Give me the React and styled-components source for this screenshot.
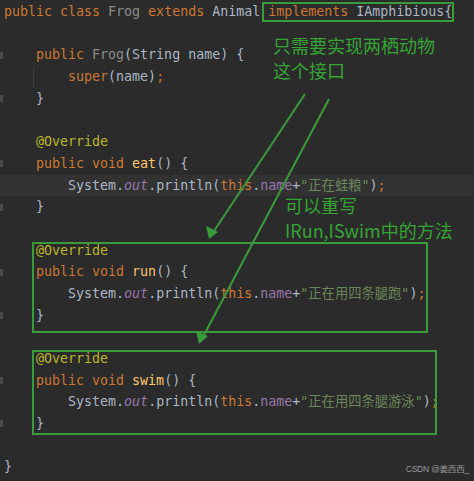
import React from "react";
import styled, { createGlobalStyle } from "styled-components";

const GlobalStyle = createGlobalStyle`
  html, body {
    margin: 0;
    padding: 0;
    background: #2b2b2b;
  }
`;

const colors = {
  kw: "#cc7832",
  plain: "#a9b7c6",
  dim: "#8c8c8c",
  ann: "#bbb529",
  fn: "#ffc66d",
  field: "#9876aa",
  str: "#6a8759",
};

const GREEN = "#3a9b3a";

export default function App() {
  return (
    <>
      <GlobalStyle />
      <Editor>
        {codeLines.map((line, index) => (
          <Line key={index} $current={line.current}>
            <Gutter>{line.fold && <FoldMark />}</Gutter>
            <Code $guide={line.guide}>
              {line.tokens.map(([kind, text], i) => (
                <Tok key={i} $kind={kind} $italic={text === "out"}>
                  {text}
                </Tok>
              ))}
            </Code>
          </Line>
        ))}

        {/* hand-drawn annotations over the editor */}
        <Annotations>
          <Box $x={262} $y={2} $w={192} $h={20} />
          <Box $x={32} $y={242} $w={396} $h={91} />
          <Box $x={32} $y={350} $w={405} $h={85} />

          <Note $x={273} $y={33}>
            只需要实现两栖动物
            <br />
            这个接口
          </Note>
          <Note $x={285} $y={193}>
            可以重写
            <br />
            IRun,ISwim中的方法
          </Note>

          <Arrows width="474" height="481" viewBox="0 0 474 481">
            <line x1="305" y1="94" x2="214" y2="231" />
            <polygon points="209,239 206,226 218,232" />
            <line x1="329" y1="99" x2="204" y2="335" />
            <polygon points="199,344 196,331 208,336" />
          </Arrows>
        </Annotations>

        <Watermark>CSDN @姜西西_</Watermark>
      </Editor>
    </>
  );
}

const Editor = styled.div`
  position: relative;
  width: 474px;
  height: 481px;
  overflow: hidden;
  padding-top: 1px;
  box-sizing: border-box;
  background: #2b2b2b;
  font-family: "DejaVu Sans Mono", "Liberation Mono", "Noto Sans CJK SC",
    monospace;
  font-size: 13.3px;
`;

const Line = styled.div`
  display: flex;
  align-items: center;
  height: 21.7px;
  line-height: 21.7px;
  white-space: pre;
  background: ${(p) => (p.$current ? "#323233" : "transparent")};
`;

const Gutter = styled.div`
  width: 4px;
  flex-shrink: 0;
  display: flex;
  align-items: center;
`;

const FoldMark = styled.span`
  display: block;
  width: 3px;
  height: 7px;
  background: #4a4a4a;
`;

const Code = styled.div`
  flex: 1;
  align-self: stretch;
  background: ${(p) =>
    p.$guide
      ? "linear-gradient(to right, transparent 29px, #3b3b3b 29px, #3b3b3b 30px, transparent 30px)"
      : "none"};
`;

const Tok = styled.span`
  color: ${(p) => colors[p.$kind] || colors.plain};
  font-style: ${(p) => (p.$italic ? "italic" : "normal")};
`;

const Annotations = styled.div`
  position: absolute;
  inset: 0;
  pointer-events: none;
`;

const Box = styled.div`
  position: absolute;
  left: ${(p) => p.$x}px;
  top: ${(p) => p.$y}px;
  width: ${(p) => p.$w}px;
  height: ${(p) => p.$h}px;
  box-sizing: border-box;
  border: 2px solid ${GREEN};
`;

const Note = styled.div`
  position: absolute;
  left: ${(p) => p.$x}px;
  top: ${(p) => p.$y}px;
  color: #35a435;
  font-family: "Noto Sans CJK SC", "Noto Sans", sans-serif;
  font-size: 18px;
  line-height: 25px;
  white-space: nowrap;
`;

const Arrows = styled.svg`
  position: absolute;
  left: 0;
  top: 0;

  line {
    stroke: ${GREEN};
    stroke-width: 2;
  }

  polygon {
    fill: ${GREEN};
  }
`;

const Watermark = styled.div`
  position: absolute;
  right: 5px;
  bottom: 7px;
  color: #9a9a9a;
  font-family: "Liberation Sans", "Noto Sans CJK SC", sans-serif;
  font-size: 8.5px;
  letter-spacing: -0.2px;
`;

const println = (text) => [
  ["plain", "        System."],
  ["field", "out"],
  ["plain", ".println("],
  ["kw", "this"],
  ["plain", "."],
  ["field", "name"],
  ["plain", "+"],
  ["str", `"${text}"`],
  ["plain", ")"],
  ["kw", ";"],
];

const method = (name, text) => [
  { tokens: [["ann", "    @Override"]] },
  {
    fold: true,
    tokens: [
      ["kw", "    public void "],
      ["fn", name],
      ["plain", "() {"],
    ],
  },
  { tokens: println(text), current: name === "eat" },
  { fold: true, tokens: [["plain", "    }"]] },
  { tokens: [] },
];

const codeLines = [
  {
    tokens: [
      ["kw", "public class "],
      ["dim", "Frog"],
      ["kw", " extends "],
      ["plain", "Animal "],
      ["kw", "implements "],
      ["plain", "IAmphibious{"],
    ],
  },
  { tokens: [] },
  {
    fold: true,
    tokens: [
      ["kw", "    public "],
      ["dim", "Frog"],
      ["plain", "(String name) {"],
    ],
  },
  {
    guide: true,
    tokens: [
      ["kw", "        super"],
      ["plain", "(name)"],
      ["kw", ";"],
    ],
  },
  { fold: true, tokens: [["plain", "    }"]] },
  { tokens: [] },
  ...method("eat", "正在蛙粮"),
  ...method("run", "正在用四条腿跑"),
  ...method("swim", "正在用四条腿游泳"),
  { tokens: [["plain", "}"]] },
];
